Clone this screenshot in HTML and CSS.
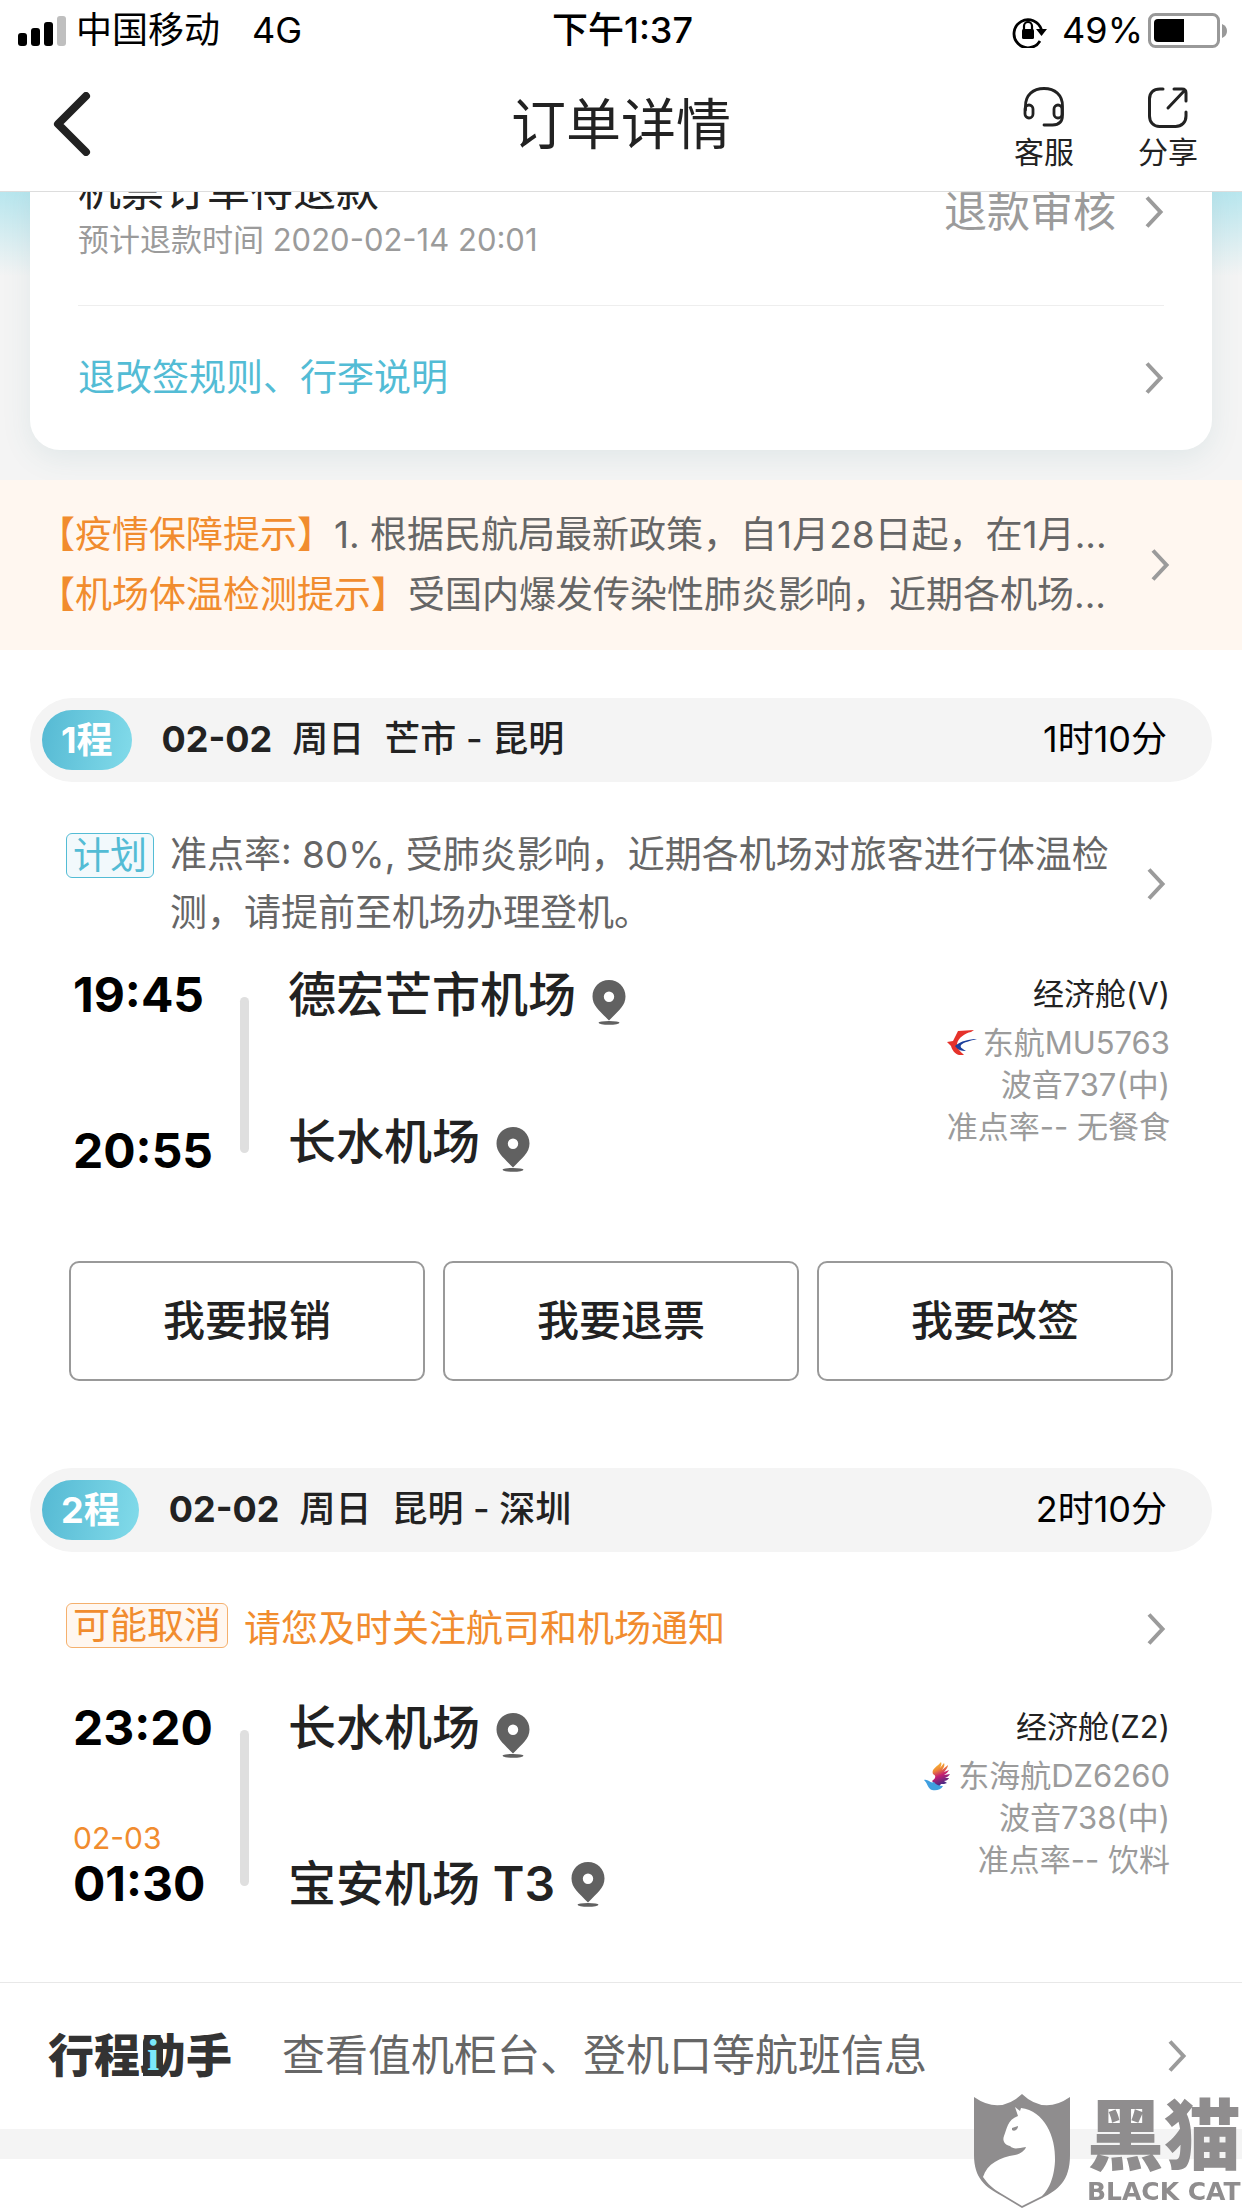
FILE: index.html
```html
<!DOCTYPE html>
<html lang="zh-CN">
<head>
    <meta charset="UTF-8">
    <meta name="viewport" content="width=device-width, initial-scale=1.0">
    <title>订单详情</title>
    <link rel="stylesheet" href="styles.css">
</head>
<body>
    <!-- Shared icons -->
    <svg class="sprite" aria-hidden="true">
        <symbol id="chevron" viewBox="0 0 20 34">
            <path d="M3 2.500 16.500 17 3 31.500" fill="none" stroke="#9b9b9b" stroke-width="4"/>
        </symbol>
        <symbol id="pin" viewBox="0 0 34 45">
            <path fill="#616161" fill-rule="evenodd" d="M17 0C7.500 0 .500 7.200.500 16.500.500 26 8 31 17 40.500 26 31 33.500 26 33.500 16.500 33.500 7.200 26.500 0 17 0zm0 11.500a5.200 5.200 0 1 1 0 10.400 5.200 5.200 0 0 1 0-10.400z"/>
            <ellipse cx="17" cy="42.800" rx="10.500" ry="1.900" fill="#616161"/>
        </symbol>
    </svg>

    <header class="top">
        <div class="status-bar">
            <div class="status-left">
                <svg width="49" height="32" viewBox="0 0 49 32">
                    <rect x="0" y="18" width="9" height="13" rx="3"/>
                    <rect x="13" y="13" width="9" height="18" rx="3"/>
                    <rect x="26" y="7" width="9" height="24" rx="3"/>
                    <rect x="39" y="1" width="9" height="30" rx="3" fill="#bfbfbf"/>
                </svg>
                <span class="carrier">中国移动</span>
                <span>4G</span>
            </div>
            <div class="clock">下午1:37</div>
            <div class="status-right">
                <svg width="36" height="34" viewBox="0 0 36 34">
                    <path d="M28 27A14 14 0 1 1 29.500 16" fill="none" stroke="#000" stroke-width="2.800"/>
                    <path d="M24 15h11l-5.500 7z"/>
                    <rect x="10" y="15" width="12" height="10" rx="1.500"/>
                    <path d="M12 16v-4a4 4 0 0 1 8 0v4" fill="none" stroke="#000" stroke-width="2.200"/>
                </svg>
                <span class="percent">49%</span>
                <svg width="79" height="36" viewBox="0 0 79 36">
                    <rect x="1.500" y="1.500" width="69" height="32" rx="6" fill="none" stroke="#999" stroke-width="3"/>
                    <path d="M6 10q0-4 4-4h26v23H10q-4 0-4-4z"/>
                    <path d="M74 11q5 2 5 7t-5 7z" fill="#999"/>
                </svg>
            </div>
        </div>
        <div class="nav">
            <button class="back" type="button" aria-label="返回">
                <svg width="38" height="64" viewBox="0 0 38 64">
                    <path d="M33 4 5 32l28 28" fill="none" stroke="#222" stroke-width="8" stroke-linecap="round" stroke-linejoin="round"/>
                </svg>
            </button>
            <h1 class="nav-title">订单详情</h1>
            <div class="nav-actions">
                <button class="action" type="button">
                    <svg width="42" height="42" viewBox="0 0 42 42" fill="none" stroke="#222" stroke-width="2.800" stroke-linecap="round">
                        <path d="M2.500 24V20C2.500 9 10 2.500 21 2.500S39.500 9 39.500 20v9c0 7-4 10-10 10H21"/>
                        <rect x="2" y="19" width="8" height="13" rx="4"/>
                        <rect x="31" y="19" width="8" height="13" rx="4"/>
                    </svg>
                    <span>客服</span>
                </button>
                <button class="action" type="button">
                    <svg width="42" height="42" viewBox="0 0 42 42" fill="none" stroke="#222" stroke-width="3" stroke-linecap="round">
                        <path d="M16 3h-3C6 3 2.500 7 2.500 13v17c0 6 4 10.500 10 10.500h16c6 0 10.500-4 10.500-10.500v-4"/>
                        <path d="M27 3h8q4 0 4 4v8M21 22 38 4"/>
                    </svg>
                    <span>分享</span>
                </button>
            </div>
        </div>
    </header>

    <main>
        <section class="summary">
            <div class="card">
                <a class="card-row refund" href="#">
                    <div>
                        <div class="refund-title">机票订单待退款</div>
                        <div class="refund-time">预计退款时间 2020-02-14 20:01</div>
                    </div>
                    <div class="refund-state">
                        <span>退款审核</span>
                        <svg class="chevron"><use href="#chevron"/></svg>
                    </div>
                </a>
                <a class="card-row rules" href="#">
                    <span>退改签规则、行李说明</span>
                    <svg class="chevron"><use href="#chevron"/></svg>
                </a>
            </div>
        </section>

        <a class="notice" href="#">
            <div class="notice-lines">
                <p><b>【疫情保障提示】</b>1. 根据民航局最新政策，自1月28日起，在1月...</p>
                <p><b>【机场体温检测提示】</b>受国内爆发传染性肺炎影响，近期各机场...</p>
            </div>
            <svg class="chevron"><use href="#chevron"/></svg>
        </a>

        <!-- First flight -->
        <section class="leg">
            <div class="leg-head">
                <span class="badge">1程</span>
                <h2 class="leg-title"><b>02-02</b><span>周日</span><span>芒市 - 昆明</span></h2>
                <span class="duration">1时10分</span>
            </div>
            <a class="leg-status" href="#">
                <span class="tag">计划</span>
                <p>准点率: 80%, 受肺炎影响，近期各机场对旅客进行体温检测，请提前至机场办理登机。</p>
                <svg class="chevron"><use href="#chevron"/></svg>
            </a>
            <div class="flight">
                <div class="times">
                    <time>19:45</time>
                    <time>20:55</time>
                </div>
                <div class="line"></div>
                <div class="airports airports-near">
                    <div class="airport">德宏芒市机场<svg class="pin"><use href="#pin"/></svg></div>
                    <div class="airport">长水机场<svg class="pin"><use href="#pin"/></svg></div>
                </div>
                <div class="plane">
                    <div class="cabin">经济舱(V)</div>
                    <div class="carrier-row">
                        <svg width="30" height="26" viewBox="0 0 30 26">
                            <path fill="#e5322b" d="M11 1 27 0 24 2C18 3 11 8 10 14c0 5 4 8 7 11H12C8 24 5 20 4 16L0 12l6-1z"/>
                            <path fill="#1c3f9c" d="M30 9C22 9 14 11 8 16c3 4 6 5 11 5-5-3-6-4-5-6 3-3 9-4 16-6z"/>
                        </svg>
                        <span>东航MU5763</span>
                    </div>
                    <div>波音737(中)</div>
                    <div>准点率-- 无餐食</div>
                </div>
            </div>
            <div class="buttons">
                <button type="button">我要报销</button>
                <button type="button">我要退票</button>
                <button type="button">我要改签</button>
            </div>
        </section>

        <!-- Second flight -->
        <section class="leg">
            <div class="leg-head">
                <span class="badge">2程</span>
                <h2 class="leg-title"><b>02-02</b><span>周日</span><span>昆明 - 深圳</span></h2>
                <span class="duration">2时10分</span>
            </div>
            <a class="leg-status leg-alert" href="#">
                <span class="tag">可能取消</span>
                <p>请您及时关注航司和机场通知</p>
                <svg class="chevron"><use href="#chevron"/></svg>
            </a>
            <div class="flight">
                <div class="times">
                    <time>23:20</time>
                    <div>
                        <span class="next-day">02-03</span>
                        <time>01:30</time>
                    </div>
                </div>
                <div class="line"></div>
                <div class="airports">
                    <div class="airport">长水机场<svg class="pin"><use href="#pin"/></svg></div>
                    <div class="airport airport-terminal"><span>宝安机场 <b>T3</b></span><svg class="pin"><use href="#pin"/></svg></div>
                </div>
                <div class="plane">
                    <div class="cabin">经济舱(Z2)</div>
                    <div class="carrier-row">
                        <svg width="28" height="30" viewBox="0 0 28 30">
                            <defs>
                                <linearGradient id="wing" x1="0" y1="0" x2=".3" y2="1">
                                    <stop offset="0" stop-color="#fbd43a"/>
                                    <stop offset=".35" stop-color="#f08a35"/>
                                    <stop offset=".6" stop-color="#c41f72"/>
                                    <stop offset="1" stop-color="#352a86"/>
                                </linearGradient>
                            </defs>
                            <path fill="url(#wing)" d="M17 1c1 2 0 4-1 6l4-5c1 2 0 4-2 7l6-5c0 2-2 5-4 7l5-2c-1 2-3 4-5 5l6-1c-1 2-3 3-5 4h4c-1 2-3 3-5 3l3 2c-2 1-4 1-6 1l-3 4-6-7c3-2 5-5 1-7-2-5 4-7 8-12z"/>
                            <path fill="#3f9fe0" d="M0 19c5-1 6 4 10 2 2 3 6 4 9 4-2 4-7 5-11 4-4-1-4-6-8-10z"/>
                        </svg>
                        <span>东海航DZ6260</span>
                    </div>
                    <div>波音738(中)</div>
                    <div>准点率-- 饮料</div>
                </div>
            </div>
        </section>

        <a class="assistant" href="#">
            <span class="assistant-logo">行程<span class="logo-help">助<i>i</i></span>手</span>
            <span class="assistant-text">查看值机柜台、登机口等航班信息</span>
            <svg class="chevron"><use href="#chevron"/></svg>
        </a>
        <div class="spacer"></div>
    </main>

    <div class="watermark">
        <svg width="98" height="114" viewBox="0 0 98 114">
            <path fill="#8f8d8e" d="M1 3q26 18 48-3 22 21 48 3v58c0 26-12 35-28 43L49 114 29 102C12 93 1 84 1 61z"/>
            <path fill="#fff" d="M42 13l5 4 1-3c23 3 35 28 34 53-1 20-8 30-13 35L49 112 29 100c-9-5-14-10-19-17 4-13 17-20 32-22 6-1 10-5 11-8-8 1-12 3-16-1-5-1-8-5-6-10 3-7 3-16 14-20z"/>
            <path fill="#8f8d8e" d="M39 34l6-2c0 3-3 6-6 4z"/>
        </svg>
        <div class="watermark-text">
            <span class="watermark-cn">黑猫</span>
            <span class="watermark-en">BLACK CAT</span>
        </div>
    </div>
</body>
</html>
```

FILE: styles.css
```css
* {
    box-sizing: border-box;
}
body {
    margin: 0;
    background: #fff;
    color: #222;
    font-family: Inter, "Noto Sans CJK SC", sans-serif;
    font-size: 37px;
    line-height: 1.2;
}
a {
    color: inherit;
    text-decoration: none;
}
p,
h1,
h2 {
    margin: 0;
    font-weight: 400;
}
button {
    padding: 0;
    border: none;
    background: none;
    color: inherit;
    font-family: inherit;
    line-height: inherit;
    cursor: pointer;
}
svg {
    display: block;
    flex: none;
}
.sprite {
    position: absolute;
    width: 0;
    height: 0;
}
.chevron {
    width: 20px;
    height: 34px;
}

/* Status bar and navigation */
.top {
    position: sticky;
    top: 0;
    z-index: 2;
    background: #fff;
    border-bottom: 1px solid #ddd;
}
.status-bar,
.nav {
    display: grid;
    grid-template-columns: 1fr auto 1fr;
    align-items: center;
}
.status-bar {
    height: 62px;
    padding: 0 15px 0 18px;
    color: #000;
    font-size: 36px;
}
.status-left,
.status-right {
    display: flex;
    align-items: center;
}
.status-right {
    justify-content: flex-end;
}
.carrier {
    margin: 0 32px 0 9px;
}
.clock {
    font-weight: 500;
}
.percent {
    margin: 0 5px 0 14px;
}
.nav {
    height: 129px;
    padding: 0 44px 6px;
}
.back {
    justify-self: start;
    margin-left: 9px;
}
.nav-title {
    font-size: 55px;
}
.nav-actions {
    display: flex;
    justify-content: flex-end;
    gap: 64px;
    padding-top: 10px;
}
.action {
    display: flex;
    flex-direction: column;
    align-items: center;
    gap: 4px;
    font-size: 30px;
    line-height: 40px;
}

/* Refund card */
.summary {
    padding: 0 30px 30px;
    background: linear-gradient(#b8e6ee, #f4f4f4 84px);
    overflow: hidden;
}
.card {
    margin-top: -30px;
    padding: 0 48px;
    border-radius: 30px;
    background: #fff;
    box-shadow: 0 8px 30px rgba(60, 130, 140, 0.1);
}
.card-row {
    display: flex;
    justify-content: space-between;
    align-items: center;
}
.refund {
    padding-bottom: 43px;
    border-bottom: 1px solid #eee;
}
.refund-title {
    font-size: 43px;
    line-height: 56px;
}
.refund-time {
    color: #9b9b9b;
    font-size: 31px;
    line-height: 44px;
}
.refund-state {
    display: flex;
    align-items: center;
    gap: 28px;
    color: #9b9b9b;
    font-size: 43px;
}
.rules {
    height: 144px;
    color: #53bcd5;
}

.notice {
    display: flex;
    align-items: center;
    justify-content: space-between;
    padding: 25px 72px 25px 38px;
    background: #fff7f0;
    color: #666;
    line-height: 60px;
}
.notice-lines {
    min-width: 0;
}
.notice-lines p {
    white-space: nowrap;
}
.notice b {
    color: #f18c2e;
    font-weight: 400;
}

/* Flight legs */
.leg {
    padding: 48px 30px 39px;
}
.leg-head {
    display: flex;
    align-items: center;
    height: 84px;
    padding: 0 45px 0 12px;
    border-radius: 42px;
    background: #f4f4f4;
    font-size: 36px;
}
.badge {
    padding: 0 19px;
    border-radius: 30px;
    background: linear-gradient(100deg, #55b9d3, #82dbea);
    color: #fff;
    font-weight: 700;
    line-height: 60px;
}
.leg-title {
    display: flex;
    align-items: baseline;
    gap: 20px;
    margin-left: 30px;
    font-size: 36px;
    font-weight: 500;
}
.duration {
    margin-left: auto;
    color: #000;
}
.leg-status {
    display: flex;
    align-items: center;
    min-height: 66px;
    margin: 44px 46px 23px 36px;
    color: #666;
    line-height: 58px;
}
.leg-status p {
    flex: 1;
    margin: 0 24px 0 16px;
}
.tag {
    align-self: flex-start;
    height: 45px;
    margin-top: 7px;
    padding: 0 6px;
    border: 1px solid #53bcd5;
    border-radius: 6px;
    background: #f2f9fc;
    color: #53bcd5;
    line-height: 43px;
}
.leg-alert {
    margin-bottom: 36px;
    color: #f18c2e;
}
.leg-alert .tag {
    border-color: #f5b06d;
    background: #fff7f0;
    color: #f18c2e;
}
.flight {
    display: grid;
    grid-template-columns: 167px 9px 1fr auto;
    min-height: 216px;
    padding: 0 42px 0 43px;
}
.times,
.airports {
    display: flex;
    flex-direction: column;
    justify-content: space-between;
}
.times time {
    display: block;
    color: #000;
    font-size: 48px;
    font-weight: 700;
    line-height: 60px;
}
.next-day {
    display: block;
    color: #f18c2e;
    font-size: 30px;
    line-height: 32px;
}
.line {
    margin: 32px 0 28px;
    border-radius: 5px;
    background: #dfdfdf;
}
.airports {
    margin-left: 39px;
}
.airports-near {
    padding-bottom: 9px;
}
.airport {
    display: flex;
    align-items: flex-end;
    gap: 16px;
    font-size: 48px;
    font-weight: 500;
    line-height: 60px;
}
.airport-terminal {
    align-items: center;
}
.airport b {
    font-weight: 600;
}
.pin {
    width: 34px;
    height: 45px;
}
.plane {
    color: #9b9b9b;
    font-size: 31px;
    line-height: 42px;
    text-align: right;
}
.cabin {
    color: #222;
    line-height: 57px;
}
.carrier-row {
    display: flex;
    align-items: center;
    justify-content: flex-end;
    gap: 6px;
}
.buttons {
    display: grid;
    grid-template-columns: repeat(3, 1fr);
    gap: 18px;
    margin: 80px 39px 0;
}
.buttons button {
    height: 120px;
    border: 2px solid #999;
    border-radius: 10px;
    font-size: 42px;
    font-weight: 500;
}

/* Trip assistant */
.assistant {
    display: flex;
    align-items: center;
    margin-top: 29px;
    height: 147px;
    padding: 0 55px 0 48px;
    border-top: 1px solid #e8e8e8;
    color: #666;
    font-size: 43px;
}
.assistant-logo {
    color: #333;
    font-size: 46px;
    font-weight: 900;
}
.logo-help {
    position: relative;
}
/* The bright "i" sits on the left half of the third character */
.logo-help i {
    position: absolute;
    left: 3px;
    bottom: 7px;
    width: 20px;
    border-radius: 6px 6px 0 0;
    background: #333;
    color: #7be8fb;
    font-family: "Liberation Serif", serif;
    font-size: 44px;
    font-style: normal;
    font-weight: 700;
    line-height: 40px;
    text-align: center;
}
.assistant-text {
    flex: 1;
    margin-left: 50px;
}
.spacer {
    height: 30px;
    background: #f4f4f4;
}

.watermark {
    position: fixed;
    right: 1px;
    bottom: 0;
    display: flex;
    gap: 16px;
    color: #8f8d8e;
}
.watermark-text {
    display: flex;
    flex-direction: column;
    justify-content: flex-end;
    padding-bottom: 2px;
}
.watermark-cn {
    font-size: 77px;
    font-weight: 900;
    line-height: 84px;
}
.watermark-en {
    font-family: "DejaVu Sans", sans-serif;
    font-size: 25px;
    font-weight: 700;
    line-height: 28px;
}
```
